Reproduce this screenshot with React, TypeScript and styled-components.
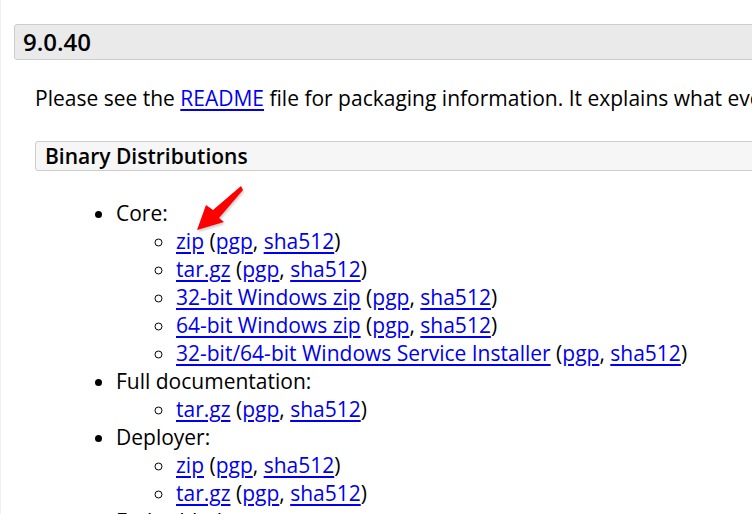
import React from 'react';
import styled, { createGlobalStyle } from 'styled-components';

const GlobalStyle = createGlobalStyle`
  html, body {
    margin: 0;
    padding: 0;
    background: #fff;
    overflow: hidden;
  }
  body {
    font-family: "Open Sans", "DejaVu Sans", sans-serif;
    font-size: 21px;
    line-height: 28px;
    color: #000;
  }
`;

const Page = styled.div`
  position: relative;
  width: 1100px;
  padding: 24px 0 0 13px;
  border-left: 1px solid #f0f0f0;
`;

const VersionTitle = styled.h3`
  margin: 0;
  height: 36px;
  box-sizing: border-box;
  padding: 0 8px;
  border: 1px solid #ccc;
  border-radius: 3px;
  background: #eaeaea;
  font-size: 24px;
  font-weight: 600;
  line-height: 34px;
`;

const Section = styled.div`
  padding-left: 21px;
`;

const Intro = styled.p`
  margin: 24px 0 0;
  white-space: nowrap;
`;

const SubTitle = styled.h4`
  margin: 29px 0 0;
  height: 30px;
  box-sizing: border-box;
  padding: 0 9px;
  border: 1px solid #ccc;
  border-radius: 3px;
  background: #f6f6f6;
  font-size: 21px;
  font-weight: 600;
  line-height: 28px;
`;

const List = styled.ul`
  margin: 28px 0 0;
  padding-left: 81px;
  list-style: disc;
`;

const SubList = styled.ul`
  margin: 0;
  padding-left: 60px;
  list-style: circle;
`;

const Item = styled.li`
  white-space: nowrap;
`;

const Link = styled.a`
  color: #0000ee;
  text-decoration: underline;
  text-decoration-thickness: 2px;
  text-underline-offset: 3px;
`;

const Arrow = styled.svg`
  position: absolute;
  left: 190px;
  top: 182px;
  width: 56px;
  height: 52px;
  filter: drop-shadow(1px 2px 1px rgba(0, 0, 0, 0.2));
`;

type Download = { name: string };

const Files: React.FC<{ items: Download[] }> = ({ items }) => (
  <SubList>
    {items.map((d, i) => (
      <Item key={i}>
        <Link href="#">{d.name}</Link> (<Link href="#">pgp</Link>, <Link href="#">sha512</Link>)
      </Item>
    ))}
  </SubList>
);

const groups: { label: string; items: Download[] }[] = [
  {
    label: 'Core:',
    items: [
      { name: 'zip' },
      { name: 'tar.gz' },
      { name: '32-bit Windows zip' },
      { name: '64-bit Windows zip' },
      { name: '32-bit/64-bit Windows Service Installer' },
    ],
  },
  { label: 'Full documentation:', items: [{ name: 'tar.gz' }] },
  { label: 'Deployer:', items: [{ name: 'zip' }, { name: 'tar.gz' }] },
  { label: 'Embedded:', items: [{ name: 'tar.gz' }, { name: 'zip' }] },
];

export default function App() {
  return (
    <>
      <GlobalStyle />
      <Page>
        <VersionTitle>9.0.40</VersionTitle>
        <Section>
          <Intro>
            Please see the <Link href="#">README</Link> file for packaging information. It explains what every distribution contains.
          </Intro>
          <SubTitle>Binary Distributions</SubTitle>
          <List>
            {groups.map((g) => (
              <Item key={g.label}>
                {g.label}
                <Files items={g.items} />
              </Item>
            ))}
          </List>
        </Section>
        <Arrow viewBox="0 0 56 52">
          <polygon points="50,4 22,28 15,23 6,48 33,40 28,36 52,8" fill="#ff0000" />
        </Arrow>
      </Page>
    </>
  );
}
